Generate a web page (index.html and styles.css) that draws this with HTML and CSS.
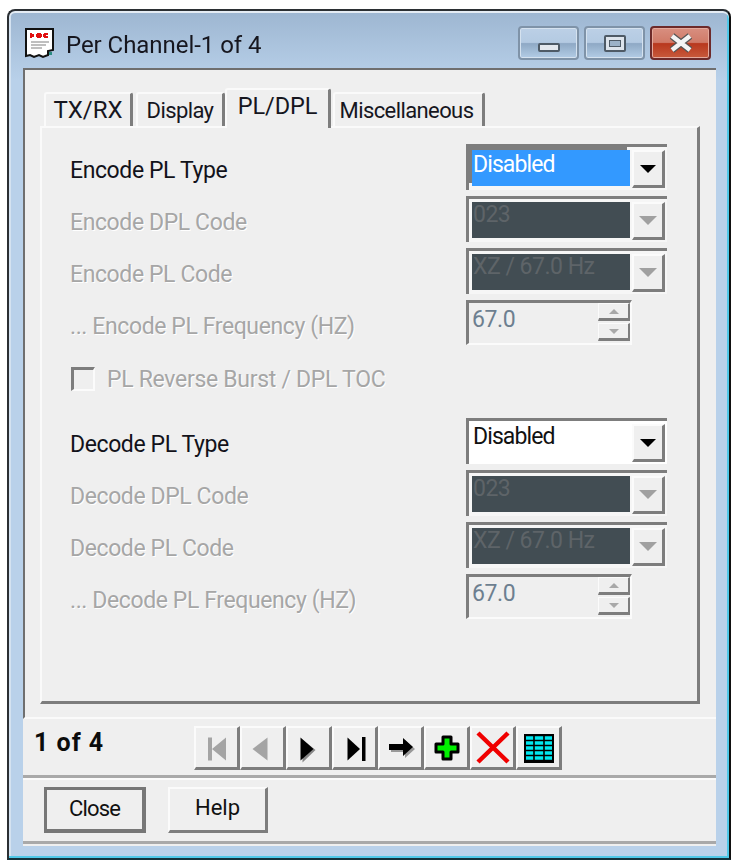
FILE: index.html
```html
<!DOCTYPE html>
<html lang="en">
<head>
<meta charset="utf-8">
<title>Per Channel-1 of 4</title>
<link rel="stylesheet" href="styles.css">
</head>
<body>
<div class="window">
  <header class="titlebar">
    <svg class="appicon" width="32" height="32" viewBox="0 0 32 32">
      <path d="M2 2H29V23L24 24V28L19 30L15 28L10 30L6 28L2 29Z" fill="#fff" stroke="#111" stroke-width="2"/>
      <path d="M6 6h2v1h2v3h-2v1h-2zM13 6h4v1h1v3h-1v1h-4v-1h-1v-3h1zM20 6h4v2h-2v1h2v2h-4v-1h-1v-3h1z" fill="#e01010"/>
      <path d="M7 15H25M7 18H22M7 21H18" stroke="#aaa" stroke-width="1.5"/>
      <path d="M25 25h3v3h-3z" fill="#2a8a80"/>
    </svg>
    <span class="title">Per Channel-1 of 4</span>
    <div class="caption">
      <div class="capbtn"><span class="glyph-min"></span></div>
      <div class="capbtn"><span class="glyph-max"></span></div>
      <div class="capbtn capclose">
        <svg width="34" height="20" viewBox="0 0 34 20"><path d="M8 3L26 17M26 3L8 17" stroke="#555" stroke-width="7"/><path d="M8 3L26 17M26 3L8 17" stroke="#f4f4f4" stroke-width="4.5"/></svg>
      </div>
    </div>
  </header>
  <div class="client">
    <section class="tabarea">
      <div class="tabs">
        <div class="tab t1">TX/RX</div>
        <div class="tab t2">Display</div>
        <div class="tab active">PL/DPL</div>
        <div class="tab t4">Miscellaneous</div>
      </div>
      <div class="panel">
        <div class="row">
          <span class="label">Encode PL Type</span>
          <div class="combo"><div class="field selected">Disabled</div><div class="drop"><i class="arrow"></i></div></div>
        </div>
        <div class="row off">
          <span class="label">Encode DPL Code</span>
          <div class="combo"><div class="field dark">023</div><div class="drop"><i class="arrow"></i></div></div>
        </div>
        <div class="row off">
          <span class="label">Encode PL Code</span>
          <div class="combo"><div class="field dark">XZ / 67.0 Hz</div><div class="drop"><i class="arrow"></i></div></div>
        </div>
        <div class="row off">
          <span class="label">... Encode PL Frequency (HZ)</span>
          <div class="spin"><div class="spinval">67.0</div><div class="spinbtns"><div class="sbtn"><i class="up"></i></div><div class="sbtn"><i class="down"></i></div></div></div>
        </div>
        <div class="checkrow">
          <span class="check"></span><span class="label">PL Reverse Burst / DPL TOC</span>
        </div>
        <div class="row">
          <span class="label">Decode PL Type</span>
          <div class="combo combo-white"><div class="field plain">Disabled</div><div class="drop"><i class="arrow"></i></div></div>
        </div>
        <div class="row off">
          <span class="label">Decode DPL Code</span>
          <div class="combo"><div class="field dark">023</div><div class="drop"><i class="arrow"></i></div></div>
        </div>
        <div class="row off">
          <span class="label">Decode PL Code</span>
          <div class="combo"><div class="field dark">XZ / 67.0 Hz</div><div class="drop"><i class="arrow"></i></div></div>
        </div>
        <div class="row off">
          <span class="label">... Decode PL Frequency (HZ)</span>
          <div class="spin"><div class="spinval">67.0</div><div class="spinbtns"><div class="sbtn"><i class="up"></i></div><div class="sbtn"><i class="down"></i></div></div></div>
        </div>
      </div>
    </section>
    <section class="navbar">
      <b class="count">1 of 4</b>
      <div class="tools">
        <div class="tool"><svg width="32" height="32" viewBox="0 0 32 32"><path d="M7 5.5h4v23h-4zM11 17L25 5.5V28.5Z" fill="#a4a4a4"/></svg></div>
        <div class="tool"><svg width="32" height="32" viewBox="0 0 32 32"><path d="M20.5 5.5V28.5L5.5 17Z" fill="#a4a4a4"/></svg></div>
        <div class="tool"><svg width="32" height="32" viewBox="0 0 32 32"><path d="M9.5 7.5L22.5 18L9.5 30.5Z" fill="#888"/><path d="M7.5 5.5L20.5 17L7.5 28.5Z" fill="#000"/></svg></div>
        <div class="tool"><svg width="32" height="32" viewBox="0 0 32 32"><path d="M8.5 5.5L21 17L8.5 28.5Z" fill="#000"/><path d="M23 5h3.5v24h-3.5z" fill="#000"/></svg></div>
        <div class="tool"><svg width="32" height="32" viewBox="0 0 32 32"><path d="M6 14H20V8L30 17L20 26V20H6Z" fill="#999"/><path d="M4 12H18V6L28 15L18 24V18H4Z" fill="#000"/></svg></div>
        <div class="tool"><svg width="28" height="28" viewBox="0 0 28 28"><path d="M10 3H18V10H25V18H18V25H10V18H3V10H10Z" fill="#00f000" stroke="#000" stroke-width="3" stroke-linejoin="round"/></svg></div>
        <div class="tool"><svg width="36" height="34" viewBox="0 0 36 34"><path d="M3 2L33 31M33 2L3 31" stroke="#f00000" stroke-width="4.5"/></svg></div>
        <div class="tool"><svg width="34" height="32" viewBox="0 0 34 32">
          <rect x="2" y="2" width="30" height="29" fill="#000"/>
          <path d="M4 6H30M4 11H30M4 16H30M4 21H30M4 26H30" stroke="#00e8f0" stroke-width="3.4"/>
          <path d="M12 3V30M22 3V30" stroke="#000" stroke-width="1.6"/>
        </svg></div>
      </div>
    </section>
    <section class="actions">
      <div class="btn default">Close</div>
      <div class="btn help">Help</div>
    </section>
  </div>
</div>
</body>
</html>
```
FILE: styles.css
```css
* { box-sizing: border-box; }
html, body { margin: 0; height: 100%; background: #fff; }
body { font-family: Roboto, "Liberation Sans", sans-serif; font-size: 22px; color: #111; overflow: hidden; }

.window {
  width: 724px; height: 851px; margin: 9px 0 0 7px;
  border: 2px solid #2b2f33; border-radius: 8px 8px 0 0;
  border-right-color: #111; border-bottom-color: #14323c;
  background: linear-gradient(#9db6d1 0, #b9d1ea 70px);
  box-shadow: inset 0 2px 0 #e4ecf4, inset -2px -2px 0 #4fc8e8, inset 2px 0 0 #d4e2f0;
  padding: 0 13px 12px 14px;
  display: flex; flex-direction: column;
  filter: blur(0.45px);
}
.titlebar { height: 57px; display: flex; align-items: center; flex: none; padding-top: 10px; }
.appicon { margin: 0 10px 3px 1px; flex: none; }
.title { font-size: 24px; color: #16161e; flex: 1; letter-spacing: -0.05px; }
.caption { display: flex; gap: 5px; margin: 0 5px 3px 0; }
.capbtn {
  width: 61px; height: 34px; border: 2px solid #7f93a8; border-radius: 4px;
  background: linear-gradient(#bcd0e6 0, #b4cae2 48%, #8fa9c5 52%, #b3cce5 100%);
  box-shadow: inset 0 0 0 1px #d5e2ef;
  display: flex; align-items: center; justify-content: center;
}
.glyph-min { width: 22px; height: 9px; margin-top: 9px; background: #e4e8ee; border: 2px solid #4e5a66; border-radius: 2px; }
.glyph-max { width: 22px; height: 17px; background: #dde4ec; border: 2px solid #4e5a66; border-radius: 2px; display: flex; align-items: center; justify-content: center; }
.glyph-max::after { content: ""; width: 10px; height: 5px; background: #9cb2c8; border: 1px solid #4e5a66; }
.capclose {
  border-color: #6d2a2a;
  background: linear-gradient(#d88f80 0, #d07a68 48%, #b8381e 52%, #c85a3c 100%);
  box-shadow: inset 0 0 0 1px #e4a99c;
}

.client { flex: 1; background: #efefef; display: flex; flex-direction: column; }
.tabarea {
  height: 651px; flex: none; border-left: 2px solid #6f6f6f; border-top: 2px solid #6f6f6f;
  border-bottom: 2px solid #fafafa; padding: 17px 16px 0 15px;
}
.tabs { display: flex; align-items: flex-end; height: 39px; padding-left: 4px; }
.tab {
  height: 34px; border-top: 2px solid #fafafa; border-left: 2px solid #fafafa; border-right: 3px solid #7d7d7d;
  border-radius: 3px 3px 0 0; font-size: 24px; line-height: 33px; text-align: center; background: #efefef;
  color: #16161e;
}
.t1 { width: 89px; margin-right: 3px; }
.t2 { width: 89px; font-size: 22px; letter-spacing: -0.6px; }
.active { width: 106px; height: 40px; font-size: 23.5px; letter-spacing: -0.1px; line-height: 33px; margin-bottom: -2px; position: relative; z-index: 2; }
.t4 { width: 152px; margin-left: 2px; padding-right: 4px; font-size: 22px; letter-spacing: -0.6px; }
.panel {
  height: 578px; width: 660px; border-left: 2px solid #fafafa; border-top: 2px solid #fafafa;
  border-right: 3px solid #7d7d7d; border-bottom: 3px solid #7d7d7d;
  padding: 16px 0 0 28px;
}

.row { height: 52px; display: flex; align-items: flex-start; }
.label { width: 396px; flex: none; padding-top: 11px; font-size: 23px; letter-spacing: -0.4px; line-height: 32px; color: #12121a; }
.off .label, .checkrow .label { color: #a6a6a6; text-shadow: 1px 1px 0 #fff; }

.combo {
  width: 201px; height: 46px; display: flex; align-items: flex-start;
  border-top: 3px solid #7d7d7d; border-left: 3px solid #7d7d7d;
  padding: 3px 2px 0 3px;
  background: #f6f6f6;
}
.combo-white { background: #fff; }
.field { width: 158px; height: 36px; font-size: 23px; line-height: 29px; padding-left: 1px; margin-right: 2px; flex: none; }
.selected { background: #3399ff; color: #fff; box-shadow: -3px -3px 0 #7d7d7d; letter-spacing: -0.9px; }
.plain { letter-spacing: -0.9px; line-height: 26px; }
.dark { background: #424d53; color: #5e6468; letter-spacing: -0.5px; line-height: 26px; }
.drop {
  width: 33px; height: 38px; flex: none; background: #efefef; border-top: 2px solid #fbfbfb; border-left: 2px solid #fbfbfb;
  border-right: 3px solid #7d7d7d; border-bottom: 3px solid #7d7d7d;
  display: flex; align-items: center; justify-content: center;
}
.arrow { width: 0; height: 0; border: 8px solid transparent; border-top: 8px solid #000; border-bottom: 0; }
.off .arrow { border-top-color: #a0a0a0; border-left-width: 9px; border-right-width: 9px; border-top-width: 9px; }

.spin {
  width: 166px; height: 45px; display: flex; background: #efefef;
  border-top: 3px solid #7d7d7d; border-left: 3px solid #7d7d7d;
  border-right: 2px solid #fbfbfb; border-bottom: 2px solid #fbfbfb;
}
.spinval { width: 129px; padding-left: 3px; font-size: 23px; letter-spacing: -0.4px; line-height: 33px; color: #6d7f90; }
.spinbtns { display: flex; flex-direction: column; gap: 2px; width: 32px; }
.sbtn {
  height: 18px; flex: none; border-top: 1px solid #fbfbfb; border-left: 1px solid #fbfbfb;
  border-right: 2px solid #7d7d7d; border-bottom: 3px solid #7d7d7d;
  display: flex; align-items: center; justify-content: center;
}
.up { width: 0; height: 0; border: 5px solid transparent; border-bottom: 5px solid #a8a8a8; border-top: 0; }
.down { width: 0; height: 0; border: 5px solid transparent; border-top: 5px solid #a8a8a8; border-bottom: 0; }

.checkrow { display: flex; align-items: center; height: 24px; margin: 15px 0 27px 1px; }
.check {
  width: 24px; height: 24px; flex: none; margin-right: 12px; background: #efefef;
  border-top: 3px solid #7d7d7d; border-left: 3px solid #7d7d7d;
  border-right: 2px solid #fbfbfb; border-bottom: 2px solid #fbfbfb;
}
.checkrow .label { padding-top: 1px; width: auto; letter-spacing: -0.3px; }

.navbar {
  height: 59px; flex: none; display: flex; align-items: flex-start;
  border-bottom: 3px solid #a9a9a9; padding: 7px 0 0 11px;
}
.count { font-size: 25px; line-height: 34px; width: 160px; color: #0c0c0c; letter-spacing: 1px; }
.tools { display: flex; }
.tool {
  width: 46px; height: 44px; border-top: 2px solid #fbfbfb; border-left: 2px solid #fbfbfb;
  border-right: 3px solid #7d7d7d; border-bottom: 3px solid #7d7d7d;
  display: flex; align-items: center; justify-content: center;
}

.actions {
  height: 66px; flex: none; display: flex; gap: 22px; padding: 7px 0 0 21px;
  border-top: 2px solid #fbfbfb; border-bottom: 3px solid #a9a9a9;
}
.btn {
  width: 100px; height: 46px; background: #efefef; text-align: center; font-size: 22px; line-height: 38px; color: #111;
  border-top: 2px solid #fbfbfb; border-left: 2px solid #fbfbfb;
  border-right: 3px solid #7d7d7d; border-bottom: 3px solid #7d7d7d;
}
.default { width: 102px; letter-spacing: -0.8px; border: 3px solid #777; border-right-width: 4px; border-bottom-width: 4px; }
```
